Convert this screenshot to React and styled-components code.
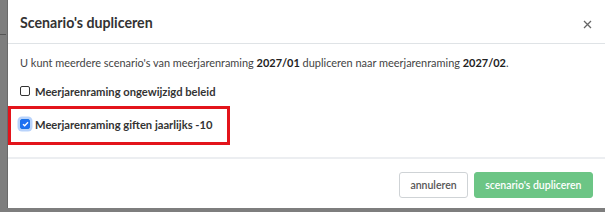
import React from "react";
import styled, { createGlobalStyle } from "styled-components";

const Global = createGlobalStyle`
  html, body { margin: 0; padding: 0; }
  body {
    background: #7e7e7e;
    font-family: "Lato", "Open Sans", sans-serif;
    width: 605px; height: 212px; overflow: hidden;
  }
`;

const Backdrop = styled.div`
  position: relative;
  width: 605px;
  height: 212px;
  display: flex;
`;

const Mark = styled.div`
  position: absolute;
  left: 0;
  top: 34px;
  width: 6px;
  height: 1px;
  background: #555;
`;

const Modal = styled.div`
  margin-left: 7px;
  width: 598px;
  height: 208px;
  background: #fff;
  display: flex;
  flex-direction: column;
  border-left: 1px solid #6a6a6a;
  box-sizing: border-box;
`;

const Header = styled.div`
  height: 44px;
  box-sizing: border-box;
  display: flex;
  align-items: center;
  justify-content: space-between;
  padding: 0 13px 0 12px;
  border-bottom: 1px solid #dfe3e6;
`;

const Title = styled.h5`
  margin: 0;
  font-size: 14.2px;
  font-weight: 700;
  color: #333;
  padding-top: 1px;
`;

const Close = styled.button`
  border: 0;
  background: none;
  padding: 0;
  width: 9px;
  height: 9px;
  margin-top: 5px;
  display: flex;
  cursor: pointer;
`;

const Body = styled.div`
  position: relative;
  flex: 1;
  padding: 12px 12px 0;
  border-bottom: 2px solid #eceef1;
`;

const Lead = styled.p`
  margin: 0 0 15px;
  font-size: 10.95px;
  color: #444;
  b { font-weight: 700; color: #222; }
`;

const Row = styled.label`
  display: flex;
  align-items: center;
  gap: 5px;
  height: 14px;
  margin-bottom: ${p => p.$gap || 0}px;
  font-size: 11.2px;
  font-weight: 700;
  color: #333;
`;

const Box = styled.span`
  width: 10px;
  height: 10px;
  box-sizing: border-box;
  border-radius: 2px;
  border: ${p => (p.$checked ? "1px solid #1a73e8" : "1.3px solid #333")};
  background: ${p => (p.$checked ? "#1d6ff2" : "#fff")};
  box-shadow: ${p => (p.$checked ? "0 0 0 2.5px #b9d3fb" : "none")};
  display: flex;
  align-items: center;
  justify-content: center;
`;

const Highlight = styled.div`
  position: absolute;
  left: 0px;
  top: 62px;
  width: 222px;
  height: 39px;
  box-sizing: border-box;
  border: 3px solid #e3141b;
  pointer-events: none;
`;

const Footer = styled.div`
  height: 49px;
  display: flex;
  align-items: center;
  justify-content: flex-end;
  gap: 6px;
  padding: 0 12px 0 0;
  box-sizing: border-box;
`;

const Button = styled.button`
  height: 26px;
  padding: 0 ${p => (p.$primary ? 10.5 : 10)}px;
  border-radius: 3px;
  font-family: inherit;
  font-size: 10.5px;
  font-weight: 600;
  border: 1px solid ${p => (p.$primary ? "#6cc585" : "#cfd3d6")};
  background: ${p => (p.$primary ? "#6cc585" : "#fff")};
  color: ${p => (p.$primary ? "#fff" : "#555")};
  margin-top: 2px;
`;

export default function App() {
  return (
    <>
      <Global />
      <Backdrop>
        <Mark />
        <Modal>
          <Header>
            <Title>Scenario's dupliceren</Title>
            <Close aria-label="close">
              <svg width="9" height="9" viewBox="0 0 9 9">
                <path d="M1 1 L8 8 M8 1 L1 8" stroke="#666" strokeWidth="1.3" />
              </svg>
            </Close>
          </Header>
          <Body>
            <Lead>
              U kunt meerdere scenario's van meerjarenraming <b>2027/01</b> dupliceren naar meerjarenraming <b>2027/02</b>.
            </Lead>
            <Row $gap={19}>
              <Box />
              Meerjarenraming ongewijzigd beleid
            </Row>
            <Row>
              <Box $checked>
                <svg width="7" height="6" viewBox="0 0 7 6">
                  <path d="M1 3.2 L2.7 4.8 L6 1.2" stroke="#fff" strokeWidth="1.3" fill="none" />
                </svg>
              </Box>
              Meerjarenraming giften jaarlijks -10
            </Row>
            <Highlight />
          </Body>
          <Footer>
            <Button>annuleren</Button>
            <Button $primary>scenario's dupliceren</Button>
          </Footer>
        </Modal>
      </Backdrop>
    </>
  );
}
